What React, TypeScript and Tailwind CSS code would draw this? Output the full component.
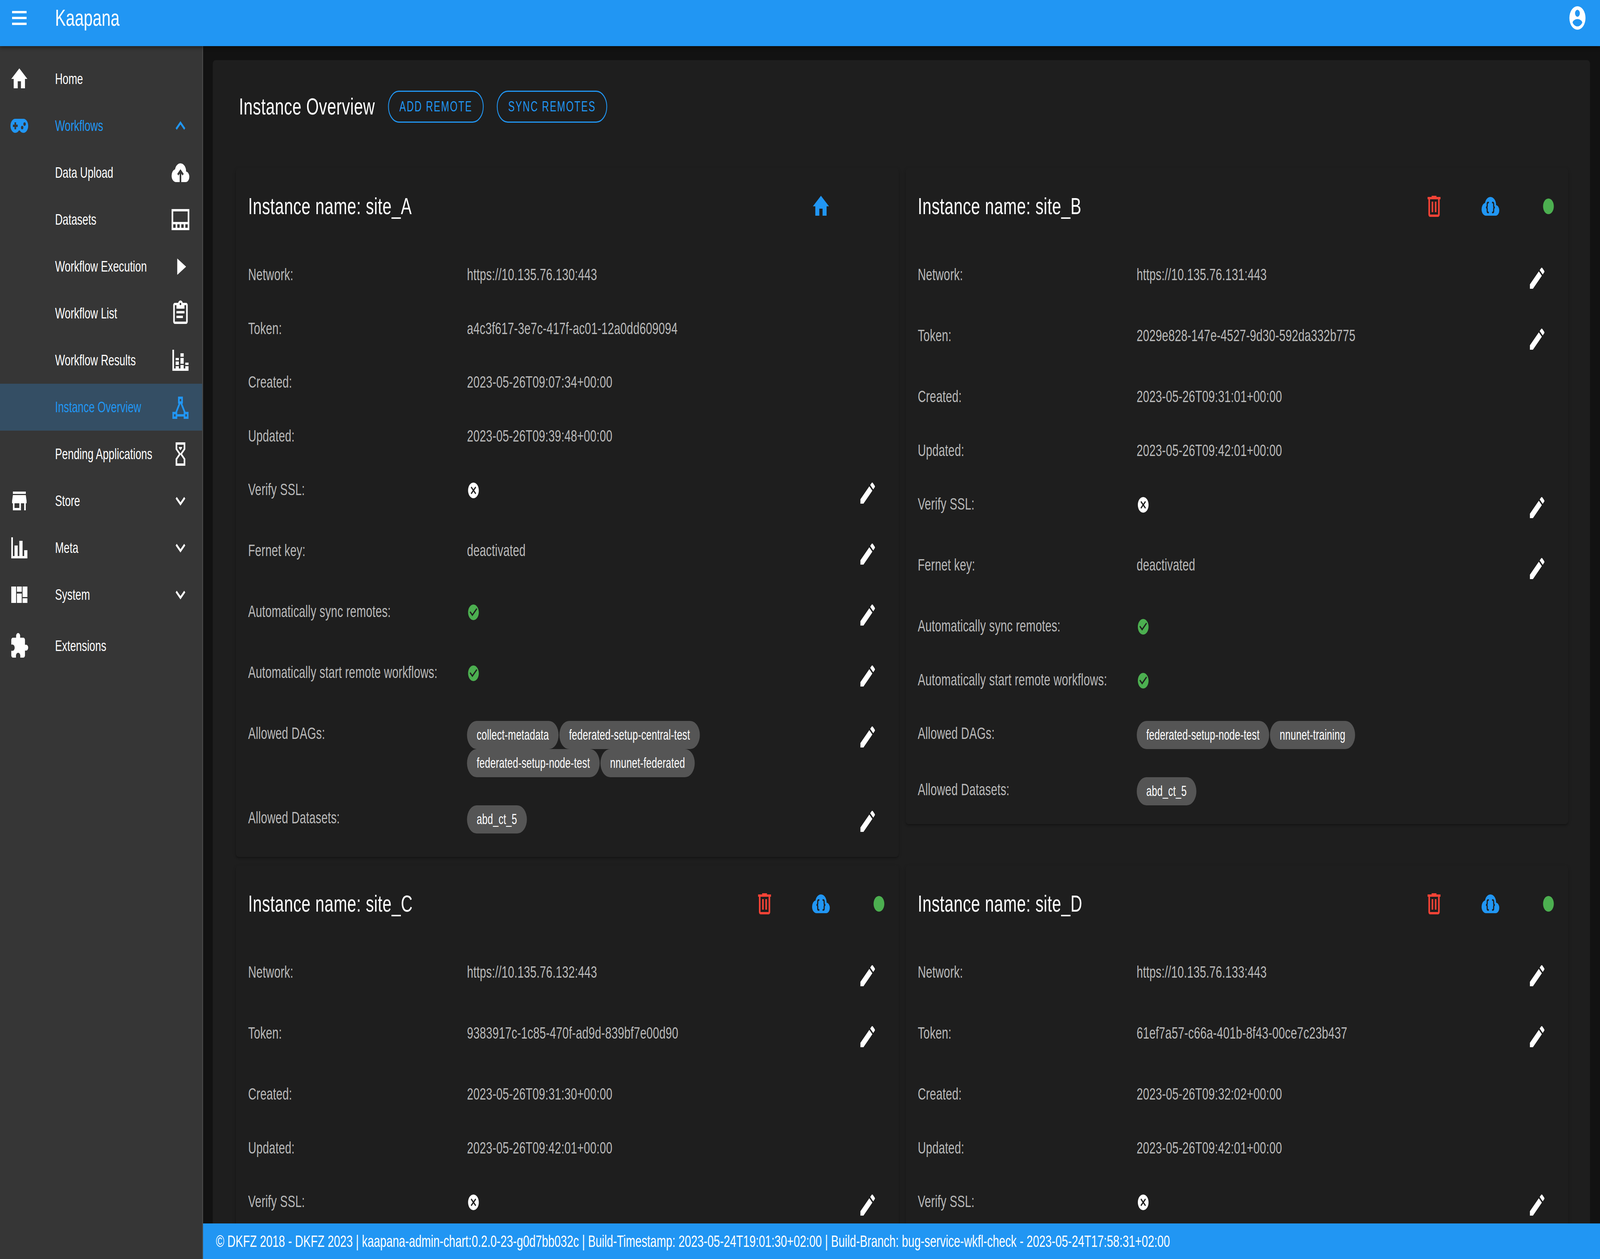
import type { ReactNode } from "react";

// ─── Icon paths (Material Design Icons) ──────────────────────────────────────

const I = {
  menu: "M3,6H21V8H3V6M3,11H21V13H3V11M3,16H21V18H3V16Z",
  account:
    "M12,19.2C9.5,19.2 7.29,17.92 6,16C6.03,14 10,12.9 12,12.9C14,12.9 17.97,14 18,16C16.71,17.92 14.5,19.2 12,19.2M12,5A3,3 0 0,1 15,8A3,3 0 0,1 12,11A3,3 0 0,1 9,8A3,3 0 0,1 12,5M12,2A10,10 0 0,0 2,12A10,10 0 0,0 12,22A10,10 0 0,0 22,12A10,10 0 0,0 12,2Z",
  home: "M10,20V14H14V20H19V12H22L12,3L2,12H5V20H10Z",
  gamepad:
    "M7,6H17A6,6 0 0,1 23,12A6,6 0 0,1 17,18C15.22,18 13.63,17.23 12.53,16H11.47C10.37,17.23 8.78,18 7,18A6,6 0 0,1 1,12A6,6 0 0,1 7,6M6,9V11H4V13H6V15H8V13H10V11H8V9H6M15.5,12A1.5,1.5 0 0,0 14,13.5A1.5,1.5 0 0,0 15.5,15A1.5,1.5 0 0,0 17,13.5A1.5,1.5 0 0,0 15.5,12M18.5,9A1.5,1.5 0 0,0 17,10.5A1.5,1.5 0 0,0 18.5,12A1.5,1.5 0 0,0 20,10.5A1.5,1.5 0 0,0 18.5,9Z",
  chevronUp: "M7.41,15.41L12,10.83L16.59,15.41L18,14L12,8L6,14L7.41,15.41Z",
  chevronDown: "M7.41,8.58L12,13.17L16.59,8.58L18,10L12,16L6,10L7.41,8.58Z",
  upload:
    "M11 20H6.5Q4.22 20 2.61 18.43 1 16.85 1 14.58 1 12.63 2.17 11.1 3.35 9.57 5.25 9.15 5.88 6.85 7.75 5.43 9.63 4 12 4 14.93 4 16.96 6.04 19 8.07 19 11 20.73 11.2 21.86 12.5 23 13.78 23 15.5 23 17.38 21.69 18.69 20.38 20 18.5 20H13V12.85L14.6 14.4L16 13L12 9L8 13L9.4 14.4L11 12.85Z",
  datasets:
    "M1 3H23V21H1ZM3 5V14H21V5ZM3 16V19H6V16ZM8 16V19H11V16ZM13 16V19H16V16ZM18 16V19H21V16Z",
  play: "M8,5.14V19.14L19,12.14L8,5.14Z",
  clipboard:
    "M19,3H14.82C14.4,1.84 13.3,1 12,1C10.7,1 9.6,1.84 9.18,3H5A2,2 0 0,0 3,5V19A2,2 0 0,0 5,21H19A2,2 0 0,0 21,19V5A2,2 0 0,0 19,3M12,3A1,1 0 0,1 13,4A1,1 0 0,1 12,5A1,1 0 0,1 11,4A1,1 0 0,1 12,3M5,5H7V8H17V5H19V19H5V5M7,10V12H17V10H7M7,14V16H15V14H7Z",
  chartStacked:
    "M22,21H2V3H4V19H6V17H10V19H12V16H16V19H18V17H22V21M18,14H22V16H18V14M12,6H16V9H12V6M16,15H12V10H16V15M6,10H10V12H6V10M10,16H6V13H10V16Z",
  triangle:
    "M9,3V9H9.73L5.79,16H2V22H8V20H16V22H22V16H18.21L14.27,9H15V3H9M11,5H13V7H11V5M12,9.04L16,16.04V18H8V16.04L12,9.04M4,18H6V20H4V18M18,18H20V20H18V18Z",
  sand: "M6,2H18V8L14,12L18,16V22H6V16L10,12L6,8V2M16,16.5L12,12.5L8,16.5V20H16V16.5M12,11.5L16,7.5V4H8V7.5L12,11.5M10,6H14V6.75L12,8.75L10,6.75V6Z",
  store: "M12,18H6V14H12M21,14V12L20,7H4L3,12V14H4V20H14V14H18V20H20V14M20,4H4V6H20V4Z",
  chartBar: "M22,21H2V3H4V19H6V10H10V19H12V6H16V19H18V14H22V21Z",
  quilt: "M2 5H8V19H2ZM9 5H15V9.5H9ZM9 11H15V19H9ZM16 5H22V14H16ZM16 15H22V19H16Z",
  puzzle:
    "M20.5,11H19V7C19,5.89 18.1,5 17,5H13V3.5A2.5,2.5 0 0,0 10.5,1A2.5,2.5 0 0,0 8,3.5V5H4A2,2 0 0,0 2,7V10.8H3.5C5,10.8 6.2,12 6.2,13.5C6.2,15 5,16.2 3.5,16.2H2V20A2,2 0 0,0 4,22H7.8V20.5C7.8,19 9,17.8 10.5,17.8C12,17.8 13.2,19 13.2,20.5V22H17A2,2 0 0,0 19,20V16H20.5A2.5,2.5 0 0,0 23,13.5A2.5,2.5 0 0,0 20.5,11Z",
  pencil:
    "M20.71,7.04C21.1,6.65 21.1,6 20.71,5.63L18.37,3.29C18,2.9 17.35,2.9 16.96,3.29L15.12,5.12L18.87,8.87M3,17.25V21H6.75L17.81,9.93L14.06,6.18L3,17.25Z",
  trash:
    "M9,3V4H4V6H5V19A2,2 0 0,0 7,21H17A2,2 0 0,0 19,19V6H20V4H15V3H9M7,6H17V19H7V6M9,8V17H11V8H9M13,8V17H15V8H13Z",
  cloud:
    "M6.5 20Q4.22 20 2.61 18.43 1 16.85 1 14.58 1 12.63 2.17 11.1 3.35 9.57 5.25 9.15 5.88 6.85 7.75 5.43 9.63 4 12 4 14.93 4 16.96 6.04 19 8.07 19 11 20.73 11.2 21.86 12.5 23 13.78 23 15.5 23 17.38 21.69 18.69 20.38 20 18.5 20Z",
  check:
    "M12 2C6.5 2 2 6.5 2 12S6.5 22 12 22 22 17.5 22 12 17.5 2 12 2M10 17L5 12L6.41 10.59L10 14.17L17.59 6.58L19 8L10 17Z",
  close:
    "M12,2C17.53,2 22,6.47 22,12C22,17.53 17.53,22 12,22C6.47,22 2,17.53 2,12C2,6.47 6.47,2 12,2M15.59,7L12,10.59L8.41,7L7,8.41L10.59,12L7,15.59L8.41,17L12,13.41L15.59,17L17,15.59L13.41,12L17,8.41L15.59,7Z",
};

function Mdi({ d, className }: { d: string; className: string }) {
  return (
    <svg viewBox="0 0 24 24" className={`shrink-0 ${className}`} fill="currentColor">
      <path d={d} fillRule="evenodd" />
    </svg>
  );
}

function CloudBraces() {
  return (
    <svg viewBox="0 0 24 24" className="w-[72px] h-[72px] shrink-0 text-[#2196f3]">
      <path d={I.cloud} fill="currentColor" />
      <g fill="none" stroke="#1e1e1e" strokeWidth="1.4">
        <path d="M10 8.75H9.25Q8 8.75 8 10V11.6Q8 13 6.5 13 8 13 8 14.4V16Q8 17.25 9.25 17.25H10" />
        <path d="M14 8.75H14.75Q16 8.75 16 10V11.6Q16 13 17.5 13 16 13 16 14.4V16Q16 17.25 14.75 17.25H14" />
      </g>
    </svg>
  );
}

// ─── Sidebar ─────────────────────────────────────────────────────────────────

const nav = [
  { label: "Home", left: I.home },
  { label: "Workflows", left: I.gamepad, right: I.chevronUp, blue: true },
  { label: "Data Upload", right: I.upload },
  { label: "Datasets", right: I.datasets },
  { label: "Workflow Execution", right: I.play },
  { label: "Workflow List", right: I.clipboard },
  { label: "Workflow Results", right: I.chartStacked },
  { label: "Instance Overview", right: I.triangle, blue: true, active: true },
  { label: "Pending Applications", right: I.sand },
  { label: "Store", left: I.store, right: I.chevronDown },
  { label: "Meta", left: I.chartBar, right: I.chevronDown },
  { label: "System", left: I.quilt, right: I.chevronDown },
];

function NavRow({
  label,
  left,
  right,
  blue,
  active,
  className = "",
}: {
  label: string;
  left?: string;
  right?: string;
  blue?: boolean;
  active?: boolean;
  className?: string;
}) {
  return (
    <div
      className={`flex h-[120px] items-center pl-[36px] pr-[45px] ${
        blue ? "text-[#2196f3]" : "text-white"
      } ${active ? "bg-[#344e64]" : ""} ${className}`}
    >
      <div className="w-[72px] h-[72px] shrink-0">
        {left && <Mdi d={left} className="w-[72px] h-[72px]" />}
      </div>
      <span className="ml-[97px] text-[39px] leading-[60px]">{label}</span>
      {right && <Mdi d={right} className="ml-auto w-[72px] h-[72px]" />}
    </div>
  );
}

// ─── Instance cards ──────────────────────────────────────────────────────────

function Chip({ children }: { children: ReactNode }) {
  return (
    <span className="flex h-[72px] items-center rounded-full bg-[#555555] px-[36px] text-[36px] tracking-[0.3px] text-white">
      {children}
    </span>
  );
}

function Row({
  label,
  edit,
  children,
}: {
  label: string;
  edit?: boolean;
  children: ReactNode;
}) {
  return (
    <div className={`flex items-start pl-[46px] pr-[80px] ${edit ? "min-h-[156px]" : "min-h-[137.5px]"}`}>
      <div className="w-[815px] shrink-0 pt-[39px] text-[42px] leading-[60px] tracking-[0.32px] text-[#b9b9b9]">
        {label}
      </div>
      <div className="min-w-0 flex-1 text-[42px] leading-[60px] tracking-[0.32px] text-[#b9b9b9]">{children}</div>
      {edit && (
        <div className="flex h-[156px] items-center">
          <Mdi d={I.pencil} className="w-[72px] h-[72px] text-white" />
        </div>
      )}
    </div>
  );
}

const Text = ({ children }: { children: ReactNode }) => <div className="pt-[39px]">{children}</div>;

const Flag = ({ on }: { on: boolean }) => (
  <div className="mt-[41px] flex h-[60px] items-center">
    <Mdi d={on ? I.check : I.close} className={`w-[48px] h-[48px] ${on ? "text-[#4caf50]" : "text-white"}`} />
  </div>
);

const Chips = ({ items }: { items: string[] }) => (
  <div className="flex max-w-[1100px] flex-wrap gap-x-[3px] pt-[37px] pb-[35px]">
    {items.map((c) => (
      <Chip key={c}>{c}</Chip>
    ))}
  </div>
);

type Instance = {
  name: string;
  local?: boolean;
  network: string;
  token: string;
  created: string;
  updated: string;
  editBase: boolean;
  editRest: boolean;
  dags?: string[];
};

function CardTitle({ name, local }: { name: string; local?: boolean }) {
  return (
    <div className="mb-[8px] flex h-[196px] items-center pl-[46px] pr-[38px] text-white">
      <div className="text-[60px] tracking-[0.75px]">Instance name: {name}</div>
      <div className="ml-auto flex items-center">
        {local ? (
          <>
            <Mdi d={I.home} className="w-[72px] h-[72px] text-[#2196f3]" />
            <div className="ml-[144px] w-[72px]" />
          </>
        ) : (
          <>
            <Mdi d={I.trash} className="w-[72px] h-[72px] text-[#f44336]" />
            <div className="ml-[138px]">
              <CloudBraces />
            </div>
            <div className="ml-[144px] flex w-[72px] justify-center">
              <span className="block h-[40px] w-[40px] rounded-full bg-[#4caf50]" />
            </div>
          </>
        )}
      </div>
    </div>
  );
}

function InstanceCard({ inst }: { inst: Instance }) {
  return (
    <div className="rounded-[10px] bg-[#1e1e1e] pb-[13px] shadow-[0_5px_5px_-3px_rgba(0,0,0,0.35),0_2px_10px_0_rgba(0,0,0,0.12)]">
      <CardTitle name={inst.name} local={inst.local} />
      <Row label="Network:" edit={inst.editBase}>
        <Text>{inst.network}</Text>
      </Row>
      <Row label="Token:" edit={inst.editBase}>
        <Text>{inst.token}</Text>
      </Row>
      <Row label="Created:">
        <Text>{inst.created}</Text>
      </Row>
      <Row label="Updated:">
        <Text>{inst.updated}</Text>
      </Row>
      <Row label="Verify SSL:" edit>
        <Flag on={false} />
      </Row>
      {inst.dags && (
        <>
          <Row label="Fernet key:" edit>
            <Text>deactivated</Text>
          </Row>
          <Row label="Automatically sync remotes:" edit={inst.editRest}>
            <Flag on />
          </Row>
          <Row label="Automatically start remote workflows:" edit={inst.editRest}>
            <Flag on />
          </Row>
          <Row label="Allowed DAGs:" edit={inst.editRest}>
            <Chips items={inst.dags} />
          </Row>
          <Row label="Allowed Datasets:" edit={inst.editRest}>
            <Chips items={["abd_ct_5"]} />
          </Row>
        </>
      )}
    </div>
  );
}

const instances: Instance[] = [
  {
    name: "site_A",
    local: true,
    network: "https://10.135.76.130:443",
    token: "a4c3f617-3e7c-417f-ac01-12a0dd609094",
    created: "2023-05-26T09:07:34+00:00",
    updated: "2023-05-26T09:39:48+00:00",
    editBase: false,
    editRest: true,
    dags: ["collect-metadata", "federated-setup-central-test", "federated-setup-node-test", "nnunet-federated"],
  },
  {
    name: "site_B",
    network: "https://10.135.76.131:443",
    token: "2029e828-147e-4527-9d30-592da332b775",
    created: "2023-05-26T09:31:01+00:00",
    updated: "2023-05-26T09:42:01+00:00",
    editBase: true,
    editRest: false,
    dags: ["federated-setup-node-test", "nnunet-training"],
  },
  {
    name: "site_C",
    network: "https://10.135.76.132:443",
    token: "9383917c-1c85-470f-ad9d-839bf7e00d90",
    created: "2023-05-26T09:31:30+00:00",
    updated: "2023-05-26T09:42:01+00:00",
    editBase: true,
    editRest: true,
  },
  {
    name: "site_D",
    network: "https://10.135.76.133:443",
    token: "61ef7a57-c66a-401b-8f43-00ce7c23b437",
    created: "2023-05-26T09:32:02+00:00",
    updated: "2023-05-26T09:42:01+00:00",
    editBase: true,
    editRest: true,
  },
];

function OutlineButton({ children }: { children: ReactNode }) {
  return (
    <button className="flex h-[82px] items-center rounded-full border-[3px] border-[#2196f3] px-[39px] text-[36px] tracking-[3.2px] text-[#2196f3]">
      {children}
    </button>
  );
}

// ─── Page ────────────────────────────────────────────────────────────────────

// The design is 5958 wide; the browser window can come out narrower, so fit it to the real width.
const DESIGN_WIDTH = 5958;

export default function App() {
  const fit = window.innerWidth / DESIGN_WIDTH;

  return (
    <div className="h-screen w-screen overflow-hidden">
      <div
        className="flex h-[3222px] w-[5958px] origin-top-left flex-col overflow-hidden bg-[#121212] font-['Liberation_Sans',Arial,sans-serif]"
        style={{ transform: `scaleX(${fit})` }}
      >
        {/* Top bar */}
        <header className="relative z-10 flex h-[118px] shrink-0 items-center bg-[#2196f3] pb-[26px] pl-[36px] pr-[48px] text-white shadow-[0_5px_10px_rgba(0,0,0,0.35)]">
          <Mdi d={I.menu} className="w-[72px] h-[72px]" />
          <div className="ml-[97px] text-[60px] leading-[72px]">Kaapana</div>
          <Mdi d={I.account} className="ml-auto w-[72px] h-[72px]" />
        </header>

        <div className="flex min-h-0 flex-1">
          {/* Sidebar */}
          <aside className="w-[756px] shrink-0 border-r-[3px] border-[#4d4d4d] bg-[#363636] pt-[24px]">
            {nav.map((n) => (
              <NavRow key={n.label} {...n} />
            ))}
            <NavRow label="Extensions" left={I.puzzle} className="mt-[11px]" />
          </aside>

          <div className="flex min-w-0 flex-1 flex-col">
            {/* Main */}
            <main className="min-h-0 flex-1 overflow-hidden pl-[36px] pr-[37px] pt-[36px]">
              <div className="rounded-[10px] bg-[#1e1e1e] pl-[86px] pr-[81px]">
                <div className="mb-[38px] flex h-[238px] items-center gap-[49px] pl-[12px]">
                  <div className="text-[60px] tracking-[0.75px] text-white">Instance Overview</div>
                  <OutlineButton>ADD REMOTE</OutlineButton>
                  <OutlineButton>SYNC REMOTES</OutlineButton>
                </div>
                <div className="grid grid-cols-2 items-start gap-x-[25px] gap-y-[22px]">
                  {instances.map((inst) => (
                    <InstanceCard key={inst.name} inst={inst} />
                  ))}
                </div>
              </div>
            </main>

            {/* Footer */}
            <footer className="flex h-[91px] shrink-0 items-center bg-[#2196f3] pl-[48px] text-[42px] text-white">
              © DKFZ 2018 - DKFZ 2023 | kaapana-admin-chart:0.2.0-23-g0d7bb032c | Build-Timestamp: 2023-05-24T19:01:30+02:00 | Build-Branch: bug-service-wkfl-check - 2023-05-24T17:58:31+02:00
            </footer>
          </div>
        </div>
      </div>
    </div>
  );
}
